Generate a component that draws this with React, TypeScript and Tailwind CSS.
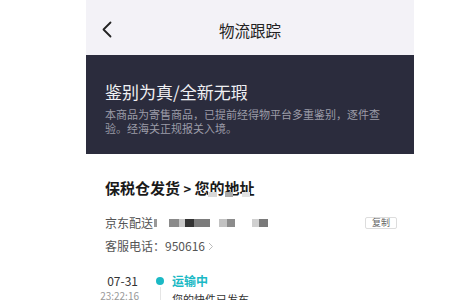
export default function App() {
  return (
    <div className="w-[450px] h-[300px] overflow-hidden bg-white pl-[86px] font-['Noto_Sans_CJK_SC','Noto_Sans',sans-serif]">
      <div className="w-[328px] h-full flex flex-col">
        {/* top bar */}
        <div className="relative h-[55px] shrink-0 bg-[#f3f2f7] flex items-center justify-center">
          <svg className="absolute left-[15px] top-[21px]" width="12" height="17" viewBox="0 0 12 17" fill="none">
            <path d="M9.5 1.5 2.5 8.5l7 7" stroke="#222" strokeWidth="1.8" strokeLinecap="round" strokeLinejoin="round" />
          </svg>
          <span className="text-[15.5px] leading-5 text-[#222] mt-[5px]">物流跟踪</span>
        </div>

        {/* appraisal panel */}
        <div className="h-[99px] shrink-0 bg-[#2b2c3d] pl-[19px] pr-[30px] pt-[26px]">
          <div className="text-[17px] leading-[22px] text-[#f0f0f3]">鉴别为真/全新无瑕</div>
          <p className="mt-[5px] text-[11px] leading-[13.5px] text-[#9c9ca8]">
            本商品为寄售商品，已提前经得物平台多重鉴别，逐件查验。经海关正规报关入境。
          </p>
        </div>

        {/* shipping info */}
        <div className="shrink-0 pl-[19px] pr-[17px] pt-[24px]">
          <div className="relative text-[15px] leading-5 font-bold text-[#1a1a1a]">
            保税仓发货 <span className="text-[13px]">&gt;</span> 您的地址
            <span className="absolute left-[103px] top-[14px] w-[9px] h-[5px] bg-[#d8d8d8]" />
            <span className="absolute left-[120px] top-[14px] w-[8px] h-[5px] bg-[#aaa]" />
            <span className="absolute left-[137px] top-[14px] w-[8px] h-[5px] bg-[#e2e2e2]" />
          </div>

          <div className="mt-[16px] h-4 flex items-center text-[12px] text-[#555]">
            <span>京东配送</span>
            <div className="ml-[1px] flex items-center h-[8px]">
              <span className="w-[3px] h-full bg-[#9a9a9a]" />
              <span className="w-[12px]" />
              <span className="w-[10px] h-full bg-[#8a8a8a]" />
              <span className="w-[6px] h-full bg-[#c8c8c8]" />
              <span className="w-[9px] h-full bg-[#333]" />
              <span className="w-[16px] h-full bg-[#7c7c7c]" />
              <span className="w-[9px]" />
              <span className="w-[8px] h-full bg-[#c2c2c2]" />
              <span className="w-[8px] h-full bg-[#8c8c8c]" />
              <span className="w-[17px]" />
              <span className="w-[7px] h-full bg-[#d0d0d0]" />
              <span className="w-[9px] h-full bg-[#7a7a7a]" />
            </div>
            <span className="ml-auto w-[32px] h-[12px] border border-[#ddd] rounded-[2px] text-[9px] leading-[10px] text-[#666] flex items-center justify-center">
              复制
            </span>
          </div>

          <div className="mt-[7px] h-4 flex items-center text-[12px] text-[#555]">
            客服电话：950616
            <svg className="ml-[3px]" width="6" height="9" viewBox="0 0 6 9" fill="none">
              <path d="M1 1l3.5 3.5L1 8" stroke="#bbb" strokeWidth="1" />
            </svg>
          </div>
        </div>

        {/* timeline */}
        <div className="shrink-0 mt-[19px] flex pl-[17px]">
          <div className="w-[36px] flex flex-col items-end">
            <span className="text-[12px] leading-4 text-[#333] mr-[1px]">07-31</span>
            <span className="text-[10px] leading-[14px] text-[#999]">23:22:16</span>
          </div>
          <div className="ml-[17px] w-[8px] flex flex-col items-center">
            <span className="mt-[4px] w-[8px] h-[8px] rounded-full bg-[#1bb9c5]" />
            <span className="mt-[2px] w-px flex-1 bg-[#e5e5e5]" />
          </div>
          <div className="ml-[8px] flex flex-col">
            <span className="text-[12px] leading-4 font-bold text-[#1bb9c5]">运输中</span>
            <span className="mt-[3px] text-[11px] leading-[14px] text-[#333]">您的快件已发车</span>
          </div>
        </div>
      </div>
    </div>
  );
}
